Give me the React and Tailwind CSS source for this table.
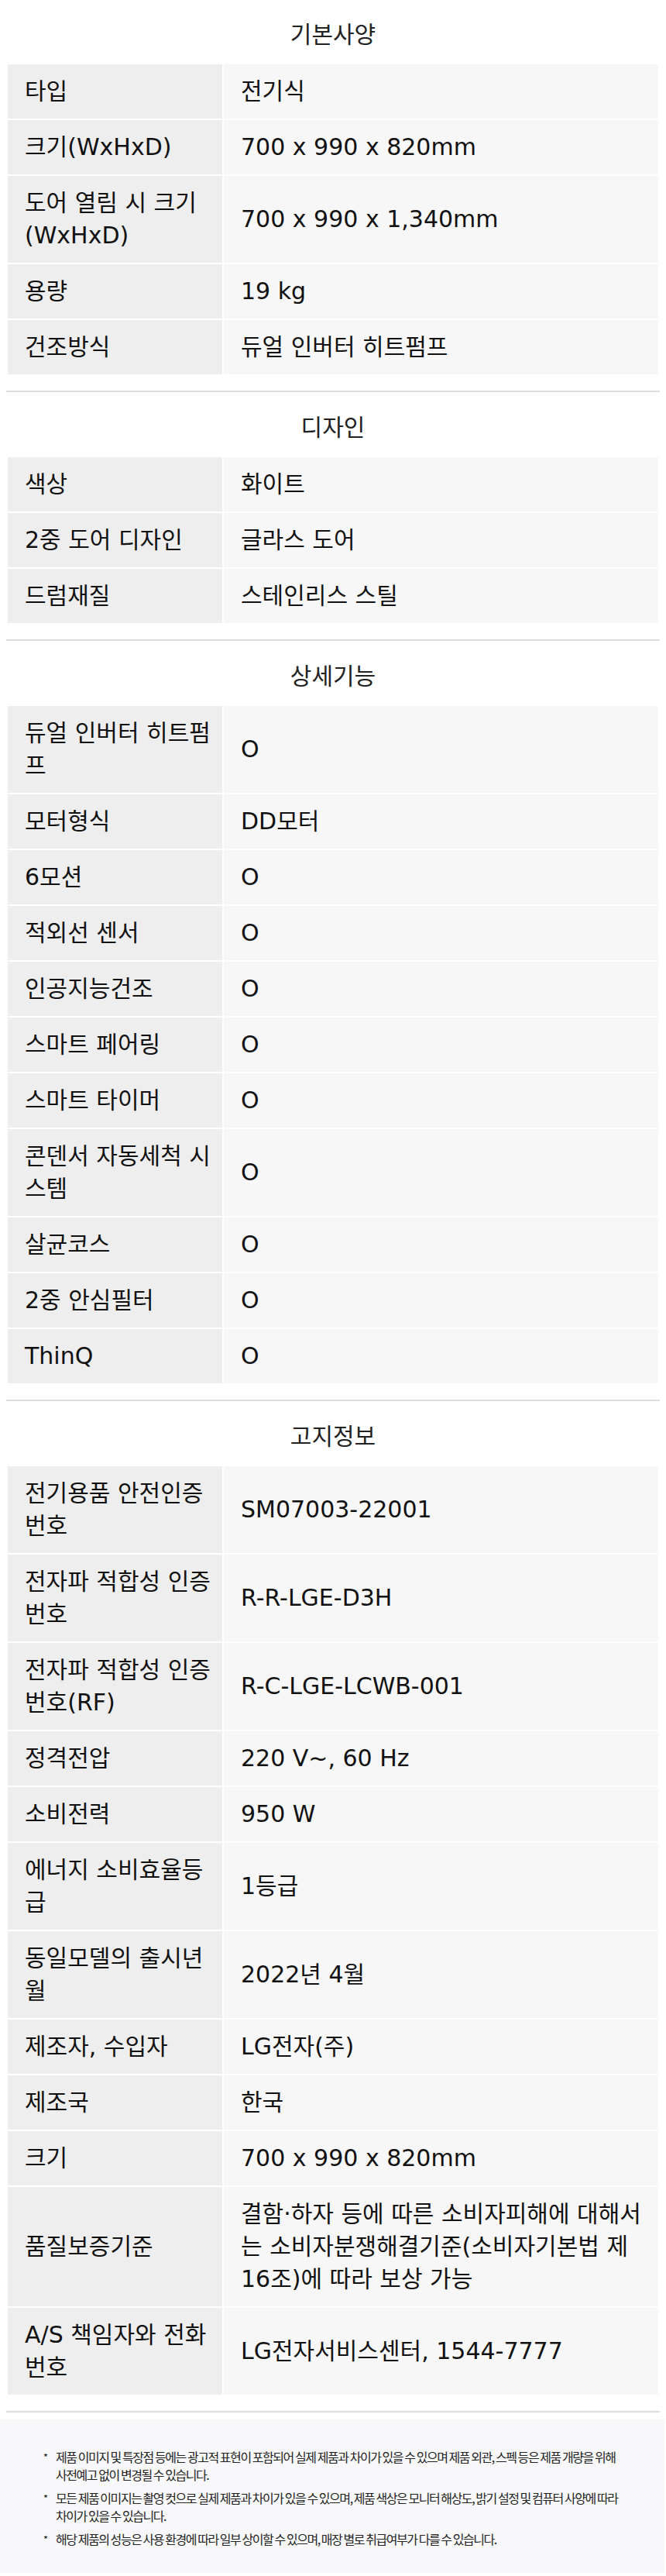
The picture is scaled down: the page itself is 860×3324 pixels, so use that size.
import React from 'react';

const font = 'font-["DejaVu_Sans","Noto_Sans_CJK_KR",sans-serif]';

const sections = [
  {
    title: '기본사양',
    rows: [
      ['타입', '전기식'],
      ['크기(WxHxD)', '700 x 990 x 820mm'],
      ['도어 열림 시 크기(WxHxD)', '700 x 990 x 1,340mm'],
      ['용량', '19 kg'],
      ['건조방식', '듀얼 인버터 히트펌프'],
    ],
  },
  {
    title: '디자인',
    rows: [
      ['색상', '화이트'],
      ['2중 도어 디자인', '글라스 도어'],
      ['드럼재질', '스테인리스 스틸'],
    ],
  },
  {
    title: '상세기능',
    rows: [
      ['듀얼 인버터 히트펌프', 'O'],
      ['모터형식', 'DD모터'],
      ['6모션', 'O'],
      ['적외선 센서', 'O'],
      ['인공지능건조', 'O'],
      ['스마트 페어링', 'O'],
      ['스마트 타이머', 'O'],
      ['콘덴서 자동세척 시스템', 'O'],
      ['살균코스', 'O'],
      ['2중 안심필터', 'O'],
      ['ThinQ', 'O'],
    ],
  },
  {
    title: '고지정보',
    rows: [
      ['전기용품 안전인증 번호', 'SM07003-22001'],
      ['전자파 적합성 인증 번호', 'R-R-LGE-D3H'],
      ['전자파 적합성 인증 번호(RF)', 'R-C-LGE-LCWB-001'],
      ['정격전압', '220 V~, 60 Hz'],
      ['소비전력', '950 W'],
      ['에너지 소비효율등급', '1등급'],
      ['동일모델의 출시년월', '2022년 4월'],
      ['제조자, 수입자', 'LG전자(주)'],
      ['제조국', '한국'],
      ['크기', '700 x 990 x 820mm'],
      ['품질보증기준', '결함·하자 등에 따른 소비자피해에 대해서는 소비자분쟁해결기준(소비자기본법 제16조)에 따라 보상 가능'],
      ['A/S 책임자와 전화 번호', 'LG전자서비스센터, 1544-7777'],
    ],
  },
];

const notices = [
  [
    '제품 이미지 및 특장점 등에는 광고적 표현이 포함되어 실제 제품과 차이가 있을 수 있으며 제품 외관, 스펙 등은 제품 개량을 위해',
    '사전예고 없이 변경될 수 있습니다.',
  ],
  [
    '모든 제품 이미지는 촬영 컷으로 실제 제품과 차이가 있을 수 있으며, 제품 색상은 모니터 해상도, 밝기 설정 및 컴퓨터 사양에 따라',
    '차이가 있을 수 있습니다.',
  ],
  ['해당 제품의 성능은 사용 환경에 따라 일부 상이할 수 있으며, 매장 별로 취급여부가 다를 수 있습니다.'],
];

function SpecSection({ title, rows, first }) {
  return (
    <section className={first ? 'pt-[24px]' : 'pt-[25px]'}>
      <h2 className="text-center leading-[42px] text-[#222]">{title}</h2>
      <div className="mt-[17px] px-[10px]">
        <div className="grid grid-cols-[277px_1fr] gap-[2px]">
          {rows.map(([label, value]) => (
            <React.Fragment key={label}>
              <div className="flex items-center bg-[#eeeeee] py-[14px] pl-[22px] pr-[7px]">
                {label}
              </div>
              <div className="flex items-center bg-[#f7f7f7] py-[14px] pl-[22px] pr-[15px]">
                {value}
              </div>
            </React.Fragment>
          ))}
        </div>
      </div>
      <div className="mt-[21px] mx-[8px] h-[2px] bg-[#dddddd]" />
    </section>
  );
}

export default function App() {
  return (
    <div className={`${font} w-[860px] bg-white text-[30px] leading-[42px] text-[#111]`}>
      {sections.map((s, i) => (
        <SpecSection key={s.title} {...s} first={i === 0} />
      ))}

      <div className='mt-[9px] mr-[2px] bg-[#f8f8fa] pt-[37px] pb-[32px] pl-[56px] font-["Noto_Sans_CJK_KR",sans-serif] text-[16px] leading-[23px] tracking-[-1.45px] text-[#222]'>
        {notices.map((lines, i) => (
          <div key={i} className={`flex ${i > 0 ? 'mt-[7px]' : ''}`}>
            <span className="w-[16px] shrink-0 text-[13px]">*</span>
            <div>
              {lines.map((line) => (
                <div key={line} className="whitespace-nowrap">
                  {line}
                </div>
              ))}
            </div>
          </div>
        ))}
      </div>
    </div>
  );
}
